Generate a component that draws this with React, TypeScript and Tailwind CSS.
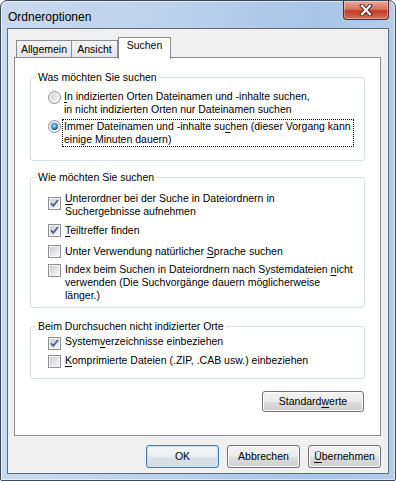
import React from "react";

function Check({ checked, className = "" }: { checked?: boolean; className?: string }) {
  return (
    <svg width="13" height="13" viewBox="0 0 13 13" className={`shrink-0 ${className}`}>
      <defs>
        <linearGradient id="cbg" x1="0" y1="0" x2="1" y2="1">
          <stop offset="0" stopColor="#c9ccd2" />
          <stop offset="1" stopColor="#f8f8f8" />
        </linearGradient>
      </defs>
      <rect x="0.5" y="0.5" width="12" height="12" fill="#f4f4f4" stroke="#8e8f8f" />
      <rect x="2" y="2" width="9" height="9" fill="url(#cbg)" />
      {checked && (
        <path d="M3 6.2 L5.3 8.9 L10 3" fill="none" stroke="#4b5e8e" strokeWidth="1.7" />
      )}
    </svg>
  );
}

function Radio({ checked, className = "" }: { checked?: boolean; className?: string }) {
  return (
    <svg width="13" height="13" viewBox="0 0 13 13" className={`shrink-0 ${className}`}>
      <defs>
        <linearGradient id="rbg" x1="0" y1="0" x2="1" y2="1">
          <stop offset="0" stopColor="#cdd0d5" />
          <stop offset="1" stopColor="#f9f9f9" />
        </linearGradient>
        <radialGradient id="rdot" cx="0.45" cy="0.4" r="0.6">
          <stop offset="0" stopColor="#b8ecff" />
          <stop offset="0.55" stopColor="#3f97d6" />
          <stop offset="1" stopColor="#0e4786" />
        </radialGradient>
      </defs>
      <circle cx="6.5" cy="6.5" r="6" fill="#f4f4f4" stroke="#8e8f8f" />
      <circle cx="6.5" cy="6.5" r="4.4" fill="url(#rbg)" />
      {checked && <circle cx="6.5" cy="6.5" r="3.4" fill="url(#rdot)" />}
    </svg>
  );
}

function U({ children }: { children: React.ReactNode }) {
  return <span className="underline underline-offset-[2px] decoration-1">{children}</span>;
}

function Btn({ children, def, className = "" }: { children: React.ReactNode; def?: boolean; className?: string }) {
  return (
    <div
      className={`flex items-center justify-center rounded-[3px] border ${
        def
          ? "border-[#3c7fb1] bg-[linear-gradient(to_bottom,#f3f6f8,#e9eef2_50%,#dbe3e9_51%,#d3dce3)] shadow-[inset_0_0_0_1px_#bfe3f7]"
          : "border-[#707070] bg-[linear-gradient(to_bottom,#f2f2f2,#ebebeb_50%,#dddddd_51%,#cfcfcf)] shadow-[inset_0_0_0_1px_#fcfcfc]"
      } ${className}`}
    >
      {children}
    </div>
  );
}

export default function App() {
  return (
    <div className="w-[396px] h-[481px] font-['Liberation_Sans',Arial,sans-serif] text-[10.5px] leading-[13px] text-black bg-white">
      <div className="w-full h-full flex flex-col border border-[#3a4a5d] rounded-t-[7px] rounded-b-[2px] overflow-hidden bg-[linear-gradient(to_right,#c8daef,#bad1eb_45%,#a8c5e6_80%,#b5cdea)] shadow-[inset_0_0_0_1px_rgba(255,255,255,0.55)]">
        {/* title bar */}
        <div className="h-[27px] flex items-start justify-between pl-[7px] pr-[6px]">
          <span className="mt-[9px] text-[12px] leading-[14px]">Ordneroptionen</span>
          <div className="w-[46px] h-[19px] rounded-b-[4px] border border-t-0 border-[#5a2a22] bg-[linear-gradient(to_bottom,#e7aa9c,#d77560_45%,#c13b24_55%,#d6735c)] shadow-[inset_0_0_0_1px_rgba(255,255,255,0.35)] flex items-center justify-center">
            <svg width="14" height="12" viewBox="0 0 14 12">
              <path d="M3 1.8 L11 10.2 M11 1.8 L3 10.2" stroke="#4a1d16" strokeWidth="4" strokeLinecap="square" />
              <path d="M3 1.8 L11 10.2 M11 1.8 L3 10.2" stroke="#ffffff" strokeWidth="2.2" strokeLinecap="square" />
            </svg>
          </div>
        </div>

        {/* client area */}
        <div className="mx-[6px] h-[446px] border border-[#5d6d80] bg-[#f0f0f0] flex flex-col pl-[6px] pr-[7px]">
          {/* tabs */}
          <div className="mt-[8px] h-[20px] flex items-end pl-[2px]">
            <div className="w-[56px] h-[17px] border border-b-0 border-[#898c95] bg-[linear-gradient(to_bottom,#f3f3f3,#e6e6e6)] text-center pt-[2px]">
              Allgemein
            </div>
            <div className="w-[46px] h-[17px] border border-l-0 border-b-0 border-[#898c95] bg-[linear-gradient(to_bottom,#f3f3f3,#e6e6e6)] text-center pt-[2px]">
              Ansicht
            </div>
            <div className="relative z-10 w-[53px] h-[22px] -mb-[2px] border border-b-0 border-[#898c95] bg-white text-center pt-[1px]">
              Suchen
            </div>
          </div>

          {/* panel */}
          <div className="h-[379px] border border-[#898c95] bg-white px-[15px] flex flex-col">
            {/* group 1 */}
            <fieldset className="mt-[13px] border border-[#d5dfe5] rounded-[3px] pt-[5px] pb-[13px]">
              <legend className="ml-[5px] px-[2px]">Was möchten Sie suchen</legend>
              <div className="flex items-start ml-[17px]">
                <Radio className="mt-[2px]" />
                <div className="ml-[1px] border border-transparent px-[1px] whitespace-nowrap">
                  <U>I</U>n indizierten Orten Dateinamen und -inhalte suchen,
                  <br />
                  in nicht indizierten Orten nur Dateinamen suchen
                </div>
              </div>
              <div className="flex items-start ml-[17px] mt-[2px]">
                <Radio checked className="mt-[1px]" />
                <div className="ml-[1px] w-[292px] border border-dotted border-black px-[1px] whitespace-nowrap">
                  Immer Dateinamen und -inhalte su<U>c</U>hen (dieser Vorgang kann
                  <br />
                  einige Minuten dauern)
                </div>
              </div>
            </fieldset>

            {/* group 2 */}
            <fieldset className="mt-[10px] border border-[#d5dfe5] rounded-[3px] pt-[8px] pb-[5px]">
              <legend className="ml-[5px] px-[2px]">Wie möchten Sie suchen</legend>
              <div className="flex items-start ml-[17px]">
                <Check checked className="mt-[5px]" />
                <div className="ml-[4px] whitespace-nowrap">
                  <U>U</U>nterordner bei der Suche in Dateiordnern in
                  <br />
                  Suchergebnisse aufnehmen
                </div>
              </div>
              <div className="flex items-start ml-[17px] mt-[6px]">
                <Check checked />
                <div className="ml-[4px] whitespace-nowrap">
                  <U>T</U>eiltreffer finden
                </div>
              </div>
              <div className="flex items-start ml-[17px] mt-[8px]">
                <Check />
                <div className="ml-[4px] whitespace-nowrap">
                  Unter Verwendung natürlicher <U>S</U>prache suchen
                </div>
              </div>
              <div className="flex items-start ml-[17px] mt-[5px]">
                <Check className="mt-[1px]" />
                <div className="ml-[4px] whitespace-nowrap">
                  Index beim Suchen in Dateiordnern nach Systemdateien <U>n</U>icht
                  <br />
                  verwenden (Die Suchvorgänge dauern möglicherweise
                  <br />
                  länger.)
                </div>
              </div>
            </fieldset>

            {/* group 3 */}
            <fieldset className="mt-[12px] border border-[#d5dfe5] rounded-[3px] pt-[2px] pb-[10px]">
              <legend className="ml-[5px] px-[2px]">Beim Durchsuchen nicht indizierter Orte</legend>
              <div className="flex items-start ml-[17px]">
                <Check checked className="mt-[2px]" />
                <div className="ml-[4px] whitespace-nowrap">
                  System<U>v</U>erzeichnisse einbeziehen
                </div>
              </div>
              <div className="flex items-start ml-[17px] mt-[4px]">
                <Check className="mt-[1px]" />
                <div className="ml-[4px] whitespace-nowrap">
                  <U>K</U>omprimierte Dateien (.ZIP, .CAB usw.) einbeziehen
                </div>
              </div>
            </fieldset>

            <Btn className="mt-[12px] self-end mr-[1px] w-[102px] h-[21px]">
              <span>
                Standard<U>w</U>erte
              </span>
            </Btn>
          </div>

          {/* bottom buttons */}
          <div className="mt-[9px] flex justify-end gap-[8px]">
            <Btn def className="w-[73px] h-[23px]">
              OK
            </Btn>
            <Btn className="w-[73px] h-[23px]">Abbrechen</Btn>
            <Btn className="w-[73px] h-[23px]">
              <span>
                <U>Ü</U>bernehmen
              </span>
            </Btn>
          </div>
        </div>
      </div>
    </div>
  );
}
